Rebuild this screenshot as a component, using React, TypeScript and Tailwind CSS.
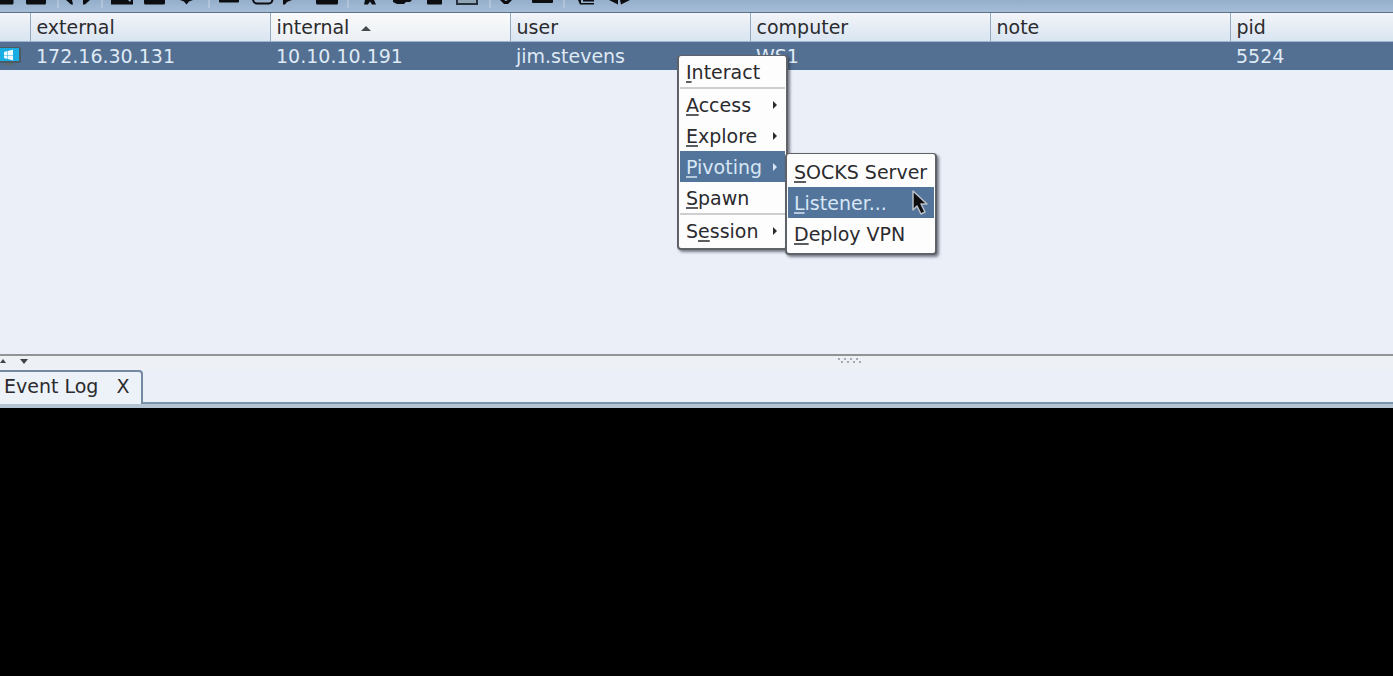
import { useState } from "react";

const FONT = "font-['DejaVu_Sans','Noto_Sans',sans-serif]";

const COLUMNS = ["external", "internal", "user", "computer", "note", "pid"];

const SESSIONS = [
  {
    external: "172.16.30.131",
    internal: "10.10.10.191",
    user: "jim.stevens",
    computer: "WS1",
    note: "",
    pid: "5524",
  },
];

interface MenuEntry {
  label: string;
  // index of the underlined shortcut letter
  key: number;
  arrow?: boolean;
  divider?: boolean;
  active?: boolean;
}

const MAIN_MENU: MenuEntry[] = [
  { label: "Interact", key: 0 },
  { label: "Access", key: 0, arrow: true, divider: true },
  { label: "Explore", key: 0, arrow: true },
  { label: "Pivoting", key: 0, arrow: true, active: true },
  { label: "Spawn", key: 0 },
  { label: "Session", key: 1, arrow: true, divider: true },
];

const PIVOT_MENU: MenuEntry[] = [
  { label: "SOCKS Server", key: 0 },
  { label: "Listener...", key: 0, active: true },
  { label: "Deploy VPN", key: 0 },
];

function Toolbar() {
  return (
    <div className="h-3 flex-shrink-0 overflow-hidden bg-linear-to-b from-[#94aecb] to-[#a5bdd7]">
      <svg width="640" height="12" viewBox="0 0 640 12" fill="#0b0d10" aria-hidden="true">
        <rect x="-4" y="-4" width="17.5" height="8.5" rx="1.5" />
        <rect x="26" y="-4" width="20" height="8.5" rx="1.5" />
        <path d="M66 0h6l1 4.5h-2zM83 0h7l-5 4.5h-2z" />
        <path d="M111 0h17l2 2 1-2h2v4.5h-22z" />
        <rect x="144" y="-4" width="21" height="8.5" rx="1.5" />
        <path d="M180 0h13l-4 1.5-2.5 3-2.5-3z" />
        <rect x="219" y="-3" width="20" height="5.5" rx="1" />
        <path d="M253 -1c0 3 2 4.500 4 4.500h12c2 0 3.500-2 3.500-4.500" fill="none" stroke="#0b0d10" strokeWidth="2" />
        <path d="M283 0h9l-5 2-2 2.500h-2z" />
        <rect x="316" y="-4" width="22" height="8.500" rx="1.500" />
        <path d="M365 0h9l2 4.500h-4l-2-3-2 3h-4z" />
        <path d="M393 0h19l-2 2h-4l-2 2h-7l-4-2z" />
        <rect x="427" y="-4" width="15" height="8.500" rx="1" />
        <path d="M457 -1v5h20v-5" fill="#8fa5b6" stroke="#26323d" strokeWidth="2" />
        <path d="M500 0h4l2 1 2-1h4l-4 4h-4z" />
        <rect x="532" y="-3" width="21" height="6" rx="1" />
        <path d="M578 0h3v3h13v1.500h-14zM583 0h11v1.500h-11z" />
        <path d="M609 0h9v4.500zM620 0h10l-9 4.500z" />
        <path d="M58 0v8M102 0v8M209 0v8M348 0v8M490 0v8M564 0v8" fill="none" stroke="#c6d6e7" />
      </svg>
    </div>
  );
}

function HostIcon() {
  return (
    <svg width="21" height="20" viewBox="0 0 21 20" className="block" role="img" aria-label="Windows host">
      <path d="M6 17h6l2 2H4z" fill="#5d6a70" />
      <rect x="-4" y="1" width="25" height="16" rx="2" fill="#4c5a63" />
      <rect x="-4" y="2" width="23" height="13" fill="#18aee4" />
      <path d="M4 6l3.500-1v4H4zM8 5l5-1.500V9H8zM4 9.500h3.500v3.500L4 12zM8 9.500h5v5L8 13z" fill="#eefaff" />
    </svg>
  );
}

function SessionTable() {
  return (
    <table className="w-full table-fixed border-collapse text-left">
      <thead>
        <tr className="h-7 bg-linear-to-b from-[#f2f5f9] via-[#e6ecf4] to-[#d9e5f2]">
          <th className="w-[30px] border-b border-[#9db5ce] p-0" aria-label="os" />
          {COLUMNS.map((name) => (
            <th
              key={name}
              scope="col"
              aria-sort={name === "internal" ? "ascending" : undefined}
              className={`border-b border-l border-b-[#9db5ce] border-l-[#93abc3] p-0 pl-1.5 font-normal leading-6 text-[#2b2b2e] ${
                name === "pid" ? "" : "w-60"
              } ${name === "internal" ? "bg-linear-to-b from-[#f9fafb] to-[#ebeff4]" : ""}`}
            >
              {name}
              {name === "internal" && (
                <svg width="10" height="5" viewBox="0 0 10 5" className="ml-3 inline-block align-middle" aria-hidden="true">
                  <path d="M0 5l5-5 5 5z" fill="#45484d" />
                </svg>
              )}
            </th>
          ))}
        </tr>
      </thead>
      <tbody>
        {SESSIONS.map((session) => (
          <tr key={session.pid} className="h-[29px] bg-[#536f92] text-[#dfeaf5]">
            <td className="p-0">
              <HostIcon />
            </td>
            <td className="p-0 pl-1.5 leading-6">{session.external}</td>
            <td className="p-0 pl-1.5 leading-6">{session.internal}</td>
            <td className="p-0 pl-1.5 leading-6">{session.user}</td>
            <td className="p-0 pl-1.5 leading-6">{session.computer}</td>
            <td className="p-0 pl-1.5 leading-6">{session.note}</td>
            <td className="p-0 pl-1.5 leading-6">{session.pid}</td>
          </tr>
        ))}
      </tbody>
    </table>
  );
}

function MenuItem({ entry }: { entry: MenuEntry }) {
  const { label, key: k } = entry;
  return (
    <button
      role="menuitem"
      aria-haspopup={entry.arrow ? "menu" : undefined}
      className={`flex h-[31px] w-full items-center justify-between pl-1.5 pr-2 text-left leading-6 whitespace-nowrap ${
        entry.active ? "bg-[#53759c] text-[#d8e6f5]" : "text-[#2b2b2e]"
      }`}
    >
      <span>
        {label.slice(0, k)}
        <span
          className={`underline decoration-2 underline-offset-2 ${
            entry.active ? "decoration-[#b4c8de]" : "decoration-[#5c5d61]"
          }`}
        >
          {label[k]}
        </span>
        {label.slice(k + 1)}
      </span>
      {entry.arrow && (
        <svg width="4" height="8" viewBox="0 0 4 8" fill="currentColor" aria-hidden="true">
          <path d="M0 0l4 4-4 4z" />
        </svg>
      )}
    </button>
  );
}

function Menu({ entries, label, className }: { entries: MenuEntry[]; label: string; className: string }) {
  return (
    <div
      role="menu"
      aria-label={label}
      className={`absolute rounded-sm border-2 border-t border-[#5f6266] bg-[#fdfdfe] shadow-[2px_2px_3px_rgba(40,45,60,0.6)] ${className}`}
    >
      {entries.map((entry) => (
        <div key={entry.label} className={entry.divider ? "border-t-2 border-[#cfcfd1]" : ""}>
          <MenuItem entry={entry} />
        </div>
      ))}
    </div>
  );
}

function Cursor() {
  return (
    <svg width="18" height="28" viewBox="0 0 18 28" className="pointer-events-none absolute left-[911px] top-[189px]" aria-hidden="true">
      <path d="M2 2v19l4-4 4 8 4-2-4-8h6z" fill="#0c0c0e" stroke="#b9c0c8" strokeWidth="1.5" strokeLinejoin="round" />
    </svg>
  );
}

function SplitBar() {
  return (
    <div className="flex h-4 flex-shrink-0 items-start border-t-2 border-[#929497] bg-[#edf0f5]">
      <div className="flex w-3/5 gap-3.5 pt-[3px]">
        <button aria-label="Collapse up">
          <svg width="6" height="5" viewBox="0 0 6 5" className="block" fill="#3f4246">
            <path d="M0 4l3-4 3 4z" />
          </svg>
        </button>
        <button aria-label="Collapse down">
          <svg width="8" height="5" viewBox="0 0 8 5" className="block" fill="#3f4246">
            <path d="M0 0h8L4 5z" />
          </svg>
        </button>
      </div>
      <svg width="24" height="6" viewBox="0 0 24 6" className="ml-0.5 mt-0.5" aria-hidden="true">
        <path
          d="M0 1h2M6 1h2M12 1h2M18 1h2M3 4h2M9 4h2M15 4h2M21 4h2"
          stroke="#a3abb5"
          strokeWidth="2"
        />
      </svg>
    </div>
  );
}

function LogTabs({ open, onClose }: { open: boolean; onClose: () => void }) {
  return (
    <div className="h-[38px] flex-shrink-0 border-b-4 border-[#b5c4d3] bg-[#ebeff8]">
      <div className="flex h-full">
        {open && (
          <div className="flex items-center gap-4.5 rounded-tr-sm border-t-2 border-r-2 border-[#748aa3] bg-[#edf1f8] pl-1 pr-3 pb-1 leading-6 text-[#2b2b2e]">
            <button role="tab" aria-selected="true">
              Event Log
            </button>
            <button aria-label="Close Event Log" onClick={onClose}>
              X
            </button>
          </div>
        )}
        <div className="flex-1 border-b-2 border-[#7d93a9]" />
      </div>
    </div>
  );
}

export default function App() {
  const [logOpen, setLogOpen] = useState(true);

  return (
    <div className={`relative flex min-h-screen flex-col overflow-hidden bg-black text-[19px] ${FONT}`}>
      <Toolbar />
      <div className="h-[342px] flex-shrink-0 border-t border-[#5f7186] bg-[#ebeff8]">
        <SessionTable />
      </div>
      <SplitBar />
      <LogTabs open={logOpen} onClose={() => setLogOpen(false)} />
      <main className="flex-1 bg-black" />

      <Menu entries={MAIN_MENU} label="Session" className="left-[677px] top-[55px] w-[111px] px-px pb-0.5" />
      <Menu entries={PIVOT_MENU} label="Pivoting" className="left-[785px] top-[153px] w-[152px] px-px pt-0.5 pb-1" />
      <Cursor />
    </div>
  );
}
